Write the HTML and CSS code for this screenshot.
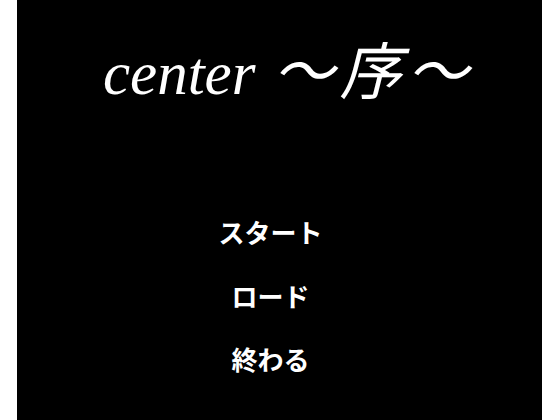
FILE: index.html
```html
<!DOCTYPE html>
<html lang="ja">
<head>
<meta charset="utf-8">
<title>center〜序〜</title>
<link rel="stylesheet" href="styles.css">
</head>
<body>
<main class="stage">
  <h1 class="title"><span class="latin">center</span><span class="cjk">〜序〜</span></h1>
  <nav class="menu">
    <div class="item">スタート</div>
    <div class="item">ロード</div>
    <div class="item">終わる</div>
  </nav>
</main>
</body>
</html>
```
FILE: styles.css
```css
html, body {
  margin: 0;
  padding: 0;
  background: #ffffff;
}
.stage {
  margin-left: 17px;
  width: 525px;
  height: 420px;
  background: #000000;
  color: #ffffff;
  display: flex;
  flex-direction: column;
  overflow: hidden;
}
.title {
  margin: 0;
  padding: 27px 0 0 86px;
  height: 80px;
  line-height: 80px;
  text-align: left;
  font-weight: normal;
  white-space: nowrap;
}
.latin {
  font-family: "Liberation Serif", "Times New Roman", serif;
  font-style: italic;
  font-size: 61px;
}
.cjk {
  margin-left: 17px;
  font-family: "Noto Sans CJK JP", sans-serif;
  font-style: italic;
  font-size: 62px;
  letter-spacing: 5px;
  line-height: 80px;
}
.menu {
  margin-top: 93px;
  padding-right: 18px;
  display: flex;
  flex-direction: column;
  align-items: center;
}
.item {
  font-family: "Noto Sans CJK JP", sans-serif;
  font-weight: bold;
  font-size: 26px;
  line-height: 63.5px;
  height: 63.5px;
}
```
